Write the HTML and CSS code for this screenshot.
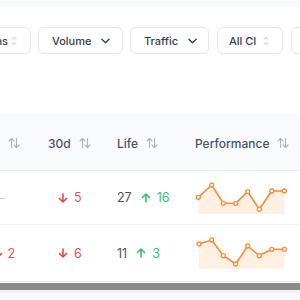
FILE: index.html
```html
<!DOCTYPE html>
<html>
<head>
<meta charset="utf-8">
<link rel="stylesheet" href="styles.css">
</head>
<body>
<div class="topband"></div>
<div class="toolbar">
  <button class="btn sel first"><span>All Campaigns</span><svg class="ud" viewBox="0 0 6 10"><path d="M1 3.5 3 1.5 5 3.5M1 6.5 3 8.5 5 6.5"/></svg></button>
  <button class="btn dd vol"><span>Volume</span><svg class="chev" viewBox="0 0 10 6"><path d="M1 1 5 5 9 1"/></svg></button>
  <button class="btn dd trf"><span>Traffic</span><svg class="chev" viewBox="0 0 10 6"><path d="M1 1 5 5 9 1"/></svg></button>
  <button class="btn sel ci"><span>All CI</span><svg class="ud" viewBox="0 0 6 10"><path d="M1 3.5 3 1.5 5 3.5M1 6.5 3 8.5 5 6.5"/></svg></button>
  <button class="btn sel last"><span>All Status</span><svg class="ud" viewBox="0 0 6 10"><path d="M1 3.5 3 1.5 5 3.5M1 6.5 3 8.5 5 6.5"/></svg></button>
</div>

<div class="table">
  <div class="row head">
    <div class="c c0"><svg class="sort" viewBox="0 0 12 12"><path d="M3.5 10.5V1.5M1 4 3.5 1.5 6 4M8.5 1.5v9M6 8l2.5 2.5L11 8"/></svg></div>
    <div class="c c1">30d <svg class="sort" viewBox="0 0 12 12"><path d="M3.5 10.5V1.5M1 4 3.5 1.5 6 4M8.5 1.5v9M6 8l2.5 2.5L11 8"/></svg></div>
    <div class="c c2">Life <svg class="sort" viewBox="0 0 12 12"><path d="M3.5 10.5V1.5M1 4 3.5 1.5 6 4M8.5 1.5v9M6 8l2.5 2.5L11 8"/></svg></div>
    <div class="c c3">Performance <svg class="sort" viewBox="0 0 12 12"><path d="M3.5 10.5V1.5M1 4 3.5 1.5 6 4M8.5 1.5v9M6 8l2.5 2.5L11 8"/></svg></div>
  </div>

  <div class="row body">
    <div class="c c0 dash">-</div>
    <div class="c c1"><span class="chg down"><svg viewBox="0 0 10 10"><path d="M5 1v8M1.5 5.5 5 9l3.5-3.5"/></svg>5</span></div>
    <div class="c c2"><span class="num">27</span><span class="chg up"><svg viewBox="0 0 10 10"><path d="M5 9V1M1.5 4.5 5 1l3.5 3.5"/></svg>16</span></div>
    <div class="c c3">
      <svg class="spark" viewBox="0 0 90 32">
        <polygon class="area" points="2.3,15.3 15.7,3 27.3,21.3 39.7,21.3 51.7,9.7 63.3,27.3 75.7,9 88.3,9 88.3,32 2.3,32"/>
        <polyline class="line" points="2.3,15.3 15.7,3 27.3,21.3 39.7,21.3 51.7,9.7 63.3,27.3 75.7,9 88.3,9"/>
        <g class="dots">
          <circle cx="2.3" cy="15.3" r="2"/><circle cx="15.7" cy="3" r="2"/><circle cx="27.3" cy="21.3" r="2"/><circle cx="39.7" cy="21.3" r="2"/><circle cx="51.7" cy="9.7" r="2"/><circle cx="63.3" cy="27.3" r="2"/><circle cx="75.7" cy="9" r="2"/><circle cx="88.3" cy="9" r="2"/>
        </g>
      </svg>
    </div>
  </div>

  <div class="row body">
    <div class="c c0 r2"><span class="chg down"><svg viewBox="0 0 10 10"><path d="M5 1v8M1.5 5.5 5 9l3.5-3.5"/></svg>2</span></div>
    <div class="c c1"><span class="chg down"><svg viewBox="0 0 10 10"><path d="M5 1v8M1.5 5.5 5 9l3.5-3.5"/></svg>6</span></div>
    <div class="c c2"><span class="num">11</span><span class="chg up"><svg viewBox="0 0 10 10"><path d="M5 9V1M1.5 4.5 5 1l3.5 3.5"/></svg>3</span></div>
    <div class="c c3">
      <svg class="spark" viewBox="0 0 90 32">
        <polygon class="area" points="3,7 15.7,3 27.3,18.7 39.7,27 51.7,9 63.3,18.7 75.7,12.3 88.3,12.3 88.3,32 3,32"/>
        <polyline class="line" points="3,7 15.7,3 27.3,18.7 39.7,27 51.7,9 63.3,18.7 75.7,12.3 88.3,12.3"/>
        <g class="dots">
          <circle cx="3" cy="7" r="2"/><circle cx="15.7" cy="3" r="2"/><circle cx="27.3" cy="18.7" r="2"/><circle cx="39.7" cy="27" r="2"/><circle cx="51.7" cy="9" r="2"/><circle cx="63.3" cy="18.7" r="2"/><circle cx="75.7" cy="12.3" r="2"/><circle cx="88.3" cy="12.3" r="2"/>
        </g>
      </svg>
    </div>
  </div>
</div>

<div class="scrollbar"><div class="thumb"></div></div>
<div class="footer"></div>
</body>
</html>
```

FILE: styles.css
```css
html, body {
  margin: 0;
  padding: 0;
  overflow: hidden;
  width: 300px;
  height: 300px;
  background: #ffffff;
  font-family: Inter, "Noto Sans", sans-serif;
}

.topband {
  height: 7px;
  background: #f8f9fb;
}

.toolbar {
  display: flex;
  gap: 7px;
  margin-top: 20px;
  white-space: nowrap;
  height: 27px;
}

.btn {
  flex: none;
  display: flex;
  align-items: center;
  height: 27px;
  box-sizing: border-box;
  border: 1px solid #e5e7eb;
  border-radius: 6px;
  background: #fff;
  font-family: Inter, sans-serif;
  font-size: 11px;
  font-weight: 500;
  color: #374151;
  overflow: hidden;
}

.btn.sel {
  justify-content: space-between;
  padding: 0 13px 0 11px;
}

.btn.dd {
  padding: 0 0 0 13px;
}

.btn.first {
  width: 100px;
  margin-left: -69px;
  justify-content: flex-end;
  gap: 3px;
}

.btn.vol { width: 85px; }
.btn.trf { width: 79px; }
.btn.ci { width: 66px; margin-left: 1px; }
.btn.last { width: 90px; margin-left: 1px; }

.ud {
  flex: none;
  width: 6px;
  height: 10px;
  fill: none;
  stroke: #b8bcc3;
  stroke-width: 1;
}

.chev {
  flex: none;
  width: 9px;
  height: 6px;
  fill: none;
  stroke: #374151;
  stroke-width: 1.5;
  stroke-linecap: round;
  stroke-linejoin: round;
  margin-left: 10px;
}

.table {
  margin-top: 61px;
}

.row {
  display: grid;
  grid-template-columns: 32px 69px 78px 1fr;
  height: 54px;
  border-bottom: 1px solid #f1f2f4;
  box-sizing: border-box;
}

.row.head {
  height: 56px;
  background: #f9fafb;
  border-top: 1px solid #f1f2f4;
  border-bottom: 1px solid #eceef1;
}

.row:last-child {
  height: 57px;
  border-bottom: 1px solid #e5e7eb;
}

.c {
  display: flex;
  align-items: center;
  font-size: 12px;
  white-space: nowrap;
}

.head .c {
  font-weight: 500;
  color: #4b5563;
}

.head .c0 {
  justify-content: flex-end;
  padding-right: 12px;
}

.head .c1,
.head .c2,
.head .c3 { padding-left: 16px; }

.sort {
  width: 12px;
  height: 12px;
  margin-left: 8px;
  fill: none;
  stroke: #aeb3ba;
  stroke-width: 1.1;
  stroke-linecap: round;
  stroke-linejoin: round;
}

.body .c0 {
  justify-content: flex-end;
}

.dash {
  padding-right: 27px;
  color: #c4c8ce;
}

.body .c0.r2 {
  padding-right: 17px;
}

.body .c0.r2 .chg svg {
  margin-right: 4px;
}

.body .c1 { padding-left: 26px; }
.body .c2 { padding-left: 16px; }
.body .c3 { padding-left: 17px; }

.chg {
  display: inline-flex;
  align-items: center;
  font-size: 12.5px;
}

.chg svg {
  width: 10px;
  height: 10px;
  margin-right: 6px;
  fill: none;
  stroke-width: 1.6;
  stroke-linecap: round;
  stroke-linejoin: round;
}

.down { color: #f05252; }
.down svg { stroke: #ef4444; }
.up { color: #34c46a; }
.up svg { stroke: #34c46a; }

.num {
  font-size: 12.5px;
  color: #4b5563;
  margin-right: 9px;
}

.spark {
  width: 90px;
  height: 32px;
  overflow: visible;
}

.area {
  fill: #fff0e4;
}

.line {
  fill: none;
  stroke: #fb8c3a;
  stroke-width: 1.6;
  stroke-linejoin: round;
}

.dots circle {
  fill: #fff;
  stroke: #fb8c3a;
  stroke-width: 1.3;
}

.scrollbar {
  margin-top: 1px;
  height: 10px;
  background: #f1f1f1;
}

.thumb {
  height: 7px;
  background: #8a8a8a;
}

.footer {
  height: 20px;
  background: #f8f9fc;
}
```
